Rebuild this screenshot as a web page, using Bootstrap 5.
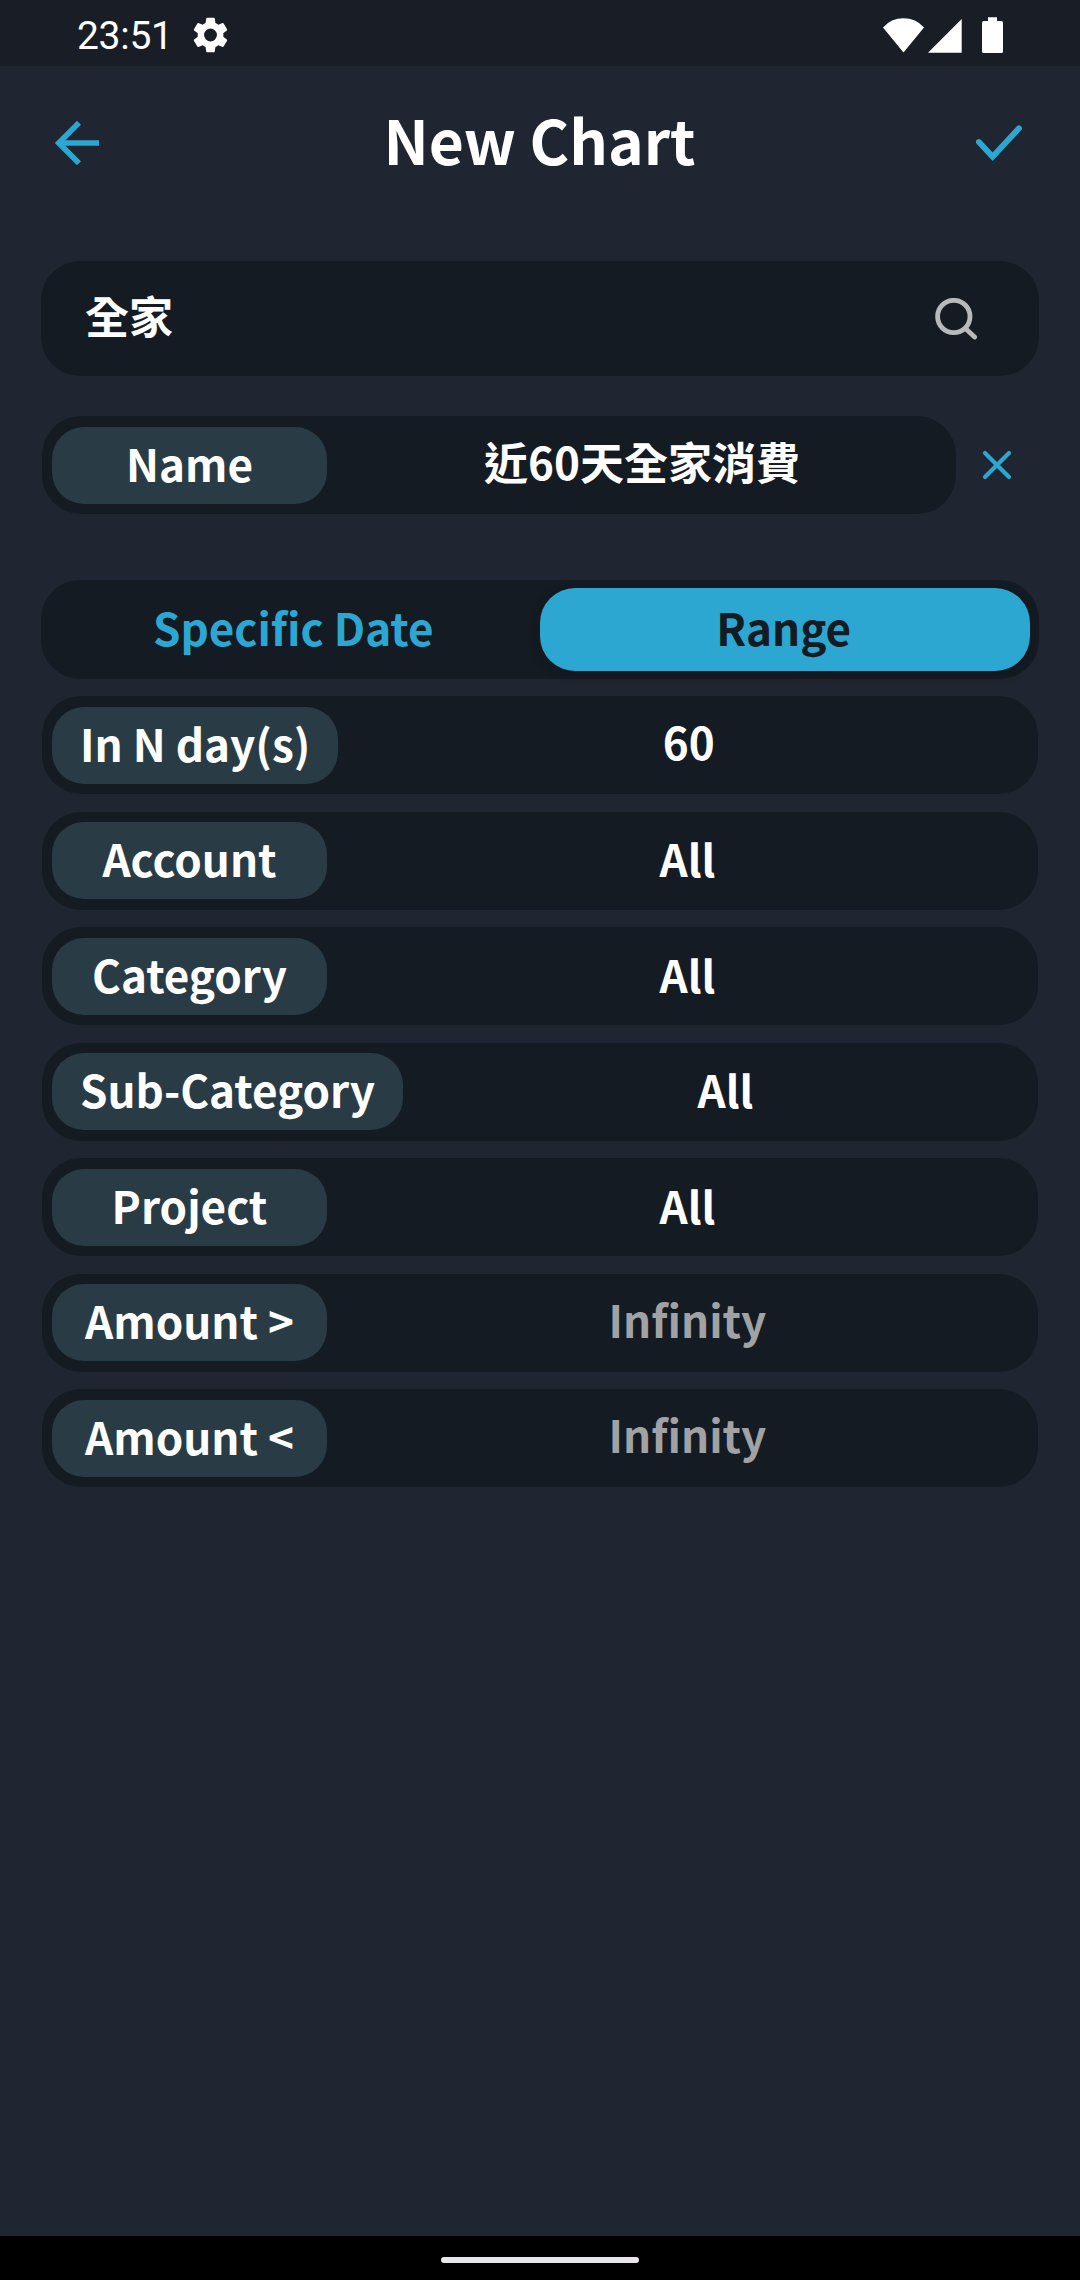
<!DOCTYPE html>
<html lang="zh-Hant">
<head>
<meta charset="utf-8">
<meta name="viewport" content="width=device-width, initial-scale=1">
<title>New Chart</title>
<link href="https://cdn.jsdelivr.net/npm/bootstrap@5.3.0/dist/css/bootstrap.min.css" rel="stylesheet">
<style>
body{background:#202631;color:#fff;font-family:"Noto Sans CJK TC","Noto Sans",sans-serif;font-weight:700;font-size:44px;line-height:1;height:2280px;overflow:hidden}
svg{display:block;flex:none}
.statusbar{height:66px;background:#191d25;padding:3px 77px 0 77px;font:400 39px/1 Roboto,sans-serif}
.clock{width:116px;padding-top:4px;letter-spacing:-.3px}
.topbar{height:154px;padding:0 58px 0 55px}
.topbar h1{font-size:60.5px;font-weight:700;line-height:1;padding:0 0 7px 2px}
.accent{color:#2ca7d1}
.panel{background:#151b22;border-radius:39px}
.searchbox{height:115px;margin:41px 41px 40px;padding:0 62px 0 44px}
.searchbox input{flex:1 1 0;min-width:0;background:none;border:0;outline:0;color:#fff;font:inherit;padding:0 0 7px}
.field{height:98px;padding-left:10px}
.namefield{width:914px}
.pill{background:#293b44;border-radius:32px;height:77px;min-width:275px;padding:0 28px 5px 28px;white-space:nowrap}
.field-value{padding:0 0 5px 10px}
.raised{padding-bottom:8px}
.flush{padding-left:1px}
.hint{color:#a0a2a4}
.segment{height:99px;padding:8px 9px 8px 8px;margin:66px 41px 17px}
.segment button{flex:1 1 0;border:0;background:none;font-weight:700;padding:0 2px 5px 0;border-radius:35px;line-height:1}
.segment .chosen{background:#2ca7d1;color:#151b22;box-shadow:0 4px 10px rgba(20,16,24,.4)}
.fields{margin:0 42px;gap:17.5px}
.namerow{margin:0 42px}
.navbarea{height:44px;background:#000}
.handle{width:198px;height:6px;border-radius:3px;background:#e8e6ea;margin-top:4px}
</style>
<script defer src="https://cdn.jsdelivr.net/npm/bootstrap@5.3.0/dist/js/bootstrap.bundle.min.js"></script>
</head>
<body class="d-flex flex-column">
<div class="statusbar d-flex align-items-center">
  <span class="clock">23:51</span>
  <svg width="35" height="36" viewBox="2.2 2 19.6 20" preserveAspectRatio="none" fill="#fff"><path d="M19.14 12.94c.04-.3.06-.61.06-.94 0-.32-.02-.64-.07-.94l2.03-1.58a.49.49 0 0 0 .12-.61l-1.92-3.32a.49.49 0 0 0-.59-.22l-2.39.96c-.5-.38-1.03-.7-1.62-.94l-.36-2.54a.48.48 0 0 0-.48-.41h-3.84a.47.47 0 0 0-.47.41l-.36 2.54c-.59.24-1.13.57-1.62.94l-2.39-.96a.48.48 0 0 0-.59.22L2.74 8.87a.47.47 0 0 0 .12.61l2.03 1.58c-.05.3-.09.63-.09.94s.02.64.07.94l-2.03 1.58a.49.49 0 0 0-.12.61l1.92 3.32c.12.22.37.29.59.22l2.39-.96c.5.38 1.03.7 1.62.94l.36 2.54c.05.24.24.41.48.41h3.84c.24 0 .44-.17.47-.41l.36-2.54c.59-.24 1.13-.56 1.62-.94l2.39.96c.22.08.47 0 .59-.22l1.92-3.32a.47.47 0 0 0-.12-.61zM12 15.6A3.6 3.6 0 1 1 12 8.4a3.6 3.6 0 0 1 0 7.2z"/></svg>
  <svg class="ms-auto" width="120" height="36" viewBox="883 16 120 36" fill="#fff"><path d="M883 26.5Q891 17.3 903.5 17.3T924 26.5L903.5 51.5ZM961.7 18V51.7H928ZM988 16.3h9V20h4.5q1.5 0 1.5 1.5v29q0 1.5-1.5 1.5h-18q-1.5 0-1.5-1.5v-29q0-1.5 1.5-1.5h4.5z"/></svg>
</div>
<header class="topbar d-flex align-items-center justify-content-between accent">
  <svg width="46" height="44" viewBox="55 121 46 44" fill="none" stroke="currentColor" stroke-width="5.6"><path d="M99 143H58M79 122.8 58.8 143 79 163.2"/></svg>
  <h1 class="m-0 text-white">New Chart</h1>
  <svg width="46" height="44" viewBox="976 121 46 44" fill="none" stroke="currentColor" stroke-width="5.8" stroke-linecap="round"><path d="M978.9 142 992.6 156.8 1019 128.3"/></svg>
</header>
<main class="flex-grow-1">
  <div class="searchbox panel d-flex align-items-center">
    <input value="全家" aria-label="Search">
    <svg width="42" height="42" viewBox="935 298 42 42" fill="none" stroke="#b8b9bb" stroke-width="4.8" stroke-linecap="round"><circle cx="953.8" cy="316.5" r="16.2"/><path d="M965.5 328.5 974.6 337"/></svg>
  </div>
  <div class="namerow d-flex align-items-center">
    <div class="field namefield panel d-flex align-items-center">
      <span class="pill d-flex align-items-center justify-content-center">Name</span>
      <span class="field-value raised flush flex-grow-1 text-center">近60天全家消費</span>
    </div>
    <svg class="accent ms-auto me-4" width="34" height="34" viewBox="980 448 34 34" fill="none" stroke="currentColor" stroke-width="4.2" stroke-linecap="round"><path d="M985 453 1009 477M1009 453 985 477"/></svg>
  </div>
  <div class="segment panel d-flex">
    <button class="accent" type="button">Specific Date</button>
    <button class="chosen" type="button">Range</button>
  </div>
  <div class="fields d-flex flex-column">
    <div class="field panel d-flex align-items-center"><span class="pill d-flex align-items-center justify-content-center">In N day(s)</span><span class="field-value raised flush flex-grow-1 text-center">60</span></div>
    <div class="field panel d-flex align-items-center"><span class="pill d-flex align-items-center justify-content-center">Account</span><span class="field-value flex-grow-1 text-center">All</span></div>
    <div class="field panel d-flex align-items-center"><span class="pill d-flex align-items-center justify-content-center">Category</span><span class="field-value flex-grow-1 text-center">All</span></div>
    <div class="field panel d-flex align-items-center"><span class="pill d-flex align-items-center justify-content-center">Sub-Category</span><span class="field-value flex-grow-1 text-center">All</span></div>
    <div class="field panel d-flex align-items-center"><span class="pill d-flex align-items-center justify-content-center">Project</span><span class="field-value flex-grow-1 text-center">All</span></div>
    <div class="field panel d-flex align-items-center"><span class="pill d-flex align-items-center justify-content-center">Amount &gt;</span><span class="field-value raised hint flex-grow-1 text-center">Infinity</span></div>
    <div class="field panel d-flex align-items-center"><span class="pill d-flex align-items-center justify-content-center">Amount &lt;</span><span class="field-value raised hint flex-grow-1 text-center">Infinity</span></div>
  </div>
</main>
<footer class="navbarea d-flex align-items-center justify-content-center"><div class="handle"></div></footer>
</body>
</html>
